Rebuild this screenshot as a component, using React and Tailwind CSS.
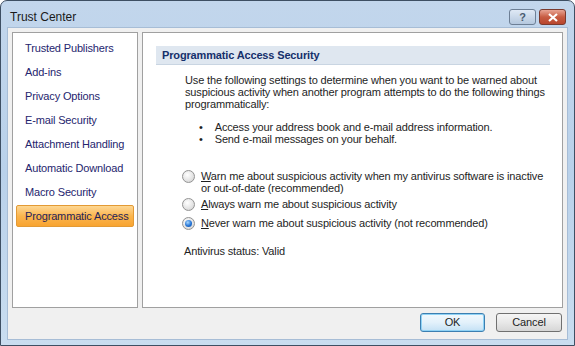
import React from "react";

const navItems = [
  "Trusted Publishers",
  "Add-ins",
  "Privacy Options",
  "E-mail Security",
  "Attachment Handling",
  "Automatic Download",
  "Macro Security",
  "Programmatic Access",
];

const Radio = ({ checked }) => (
  <span className="w-[13px] h-[13px] shrink-0 rounded-full border border-[#939393] bg-[radial-gradient(circle_at_40%_35%,#ffffff,#e0e0e0_65%,#c6c6c6)] flex items-center justify-center">
    {checked && (
      <span className="w-[7px] h-[7px] rounded-full bg-[radial-gradient(circle_at_40%_35%,#a8d8ff,#2473d4_55%,#0d4ea6)]" />
    )}
  </span>
);

const App = () => {
  return (
    <div
      className="w-[575px] h-[346px] flex flex-col rounded-t-[7px] border border-[#3e4f63] bg-gradient-to-b from-[#c2d6ec] via-[#b9d1ea] to-[#c9ddf0] text-[11px] tracking-[-0.15px] text-[#1e1e1e]"
      style={{ fontFamily: '"Liberation Sans", Arial, sans-serif' }}
    >
      {/* title bar */}
      <div className="h-[26px] flex items-start justify-between pl-[9px] pr-[8px]">
        <span className="mt-[9px] text-[12px] leading-[14px] tracking-normal text-[#1a1a1a]">Trust Center</span>
        <div className="flex gap-[3px] mt-[8px]">
          <button className="w-[27px] h-[16px] rounded-[3px] border border-[#6d7f95] bg-gradient-to-b from-[#dfe9f5] to-[#b5c8de] flex items-center justify-center text-[11px] font-bold text-[#4a5b70] leading-none">
            ?
          </button>
          <button className="w-[27px] h-[16px] rounded-[3px] border border-[#7a3a2e] bg-gradient-to-b from-[#e7a494] via-[#c75c42] to-[#b8462d] flex items-center justify-center">
            <svg width="10" height="9" viewBox="0 0 10 9">
              <path d="M1 1 L9 8 M9 1 L1 8" stroke="#ffffff" strokeWidth="2.2" />
            </svg>
          </button>
        </div>
      </div>

      {/* body */}
      <div className="flex-1 mx-[6px] mb-[5px] bg-[#f0f0f0] border border-[#a7bdd6] flex flex-col pt-[4px] pl-[4px] pr-[4px]">
        <div className="flex gap-[4px] h-[276px]">
          {/* left nav */}
          <div className="w-[126px] shrink-0 bg-white border border-[#a0a0a0] pt-[3px] px-[3px] flex flex-col">
            {navItems.map((item, i) => {
              const active = i === navItems.length - 1;
              return (
                <div
                  key={item}
                  className={
                    active
                      ? "h-[22px] my-[1px] flex items-center pl-[8px] whitespace-nowrap rounded-[2px] border border-[#e39a35] bg-gradient-to-b from-[#fdd792] via-[#fbb54d] to-[#f8a430] text-[#1f1f5a]"
                      : "h-[22px] my-[1px] flex items-center pl-[9px] whitespace-nowrap text-[#25256e]"
                  }
                >
                  {item}
                </div>
              );
            })}
          </div>

          {/* right content */}
          <div className="flex-1 min-w-0 bg-white border border-[#a0a0a0] pt-[13px] pl-[13px] pr-[12px]">
            <div className="h-[19px] bg-[#dfe7f0] border-b border-[#c9d5e2] flex items-center pl-[6px] font-bold text-[#15306b]">
              Programmatic Access Security
            </div>
            <div className="pl-[29px] pt-[9px] leading-[12px] whitespace-nowrap">
              <p>
                Use the following settings to determine when you want to be warned about
                <br />
                suspicious activity when another program attempts to do the following things
                <br />
                programmatically:
              </p>
              <ul className="mt-[11px] pl-[14px]">
                <li className="flex gap-[12px]">
                  <span>•</span>
                  <span>Access your address book and e-mail address information.</span>
                </li>
                <li className="flex gap-[12px]">
                  <span>•</span>
                  <span>Send e-mail messages on your behalf.</span>
                </li>
              </ul>
            </div>
            <div className="pl-[26px] pt-[25px] leading-[12px] whitespace-nowrap flex flex-col">
              <label className="flex gap-[6px]">
                <Radio />
                <span>
                  <u>W</u>arn me about suspicious activity when my antivirus software is inactive
                  <br />
                  or out-of-date (recommended)
                </span>
              </label>
              <label className="flex gap-[6px] mt-[4px]">
                <Radio />
                <span>
                  <u>A</u>lways warn me about suspicious activity
                </span>
              </label>
              <label className="flex gap-[6px] mt-[6px]">
                <Radio checked />
                <span>
                  <u>N</u>ever warn me about suspicious activity (not recommended)
                </span>
              </label>
            </div>
            <div className="pl-[28px] pt-[15px] leading-[12px]">Antivirus status: Valid</div>
          </div>
        </div>

        {/* buttons */}
        <div className="flex justify-end gap-[11px] pt-[5px] pr-[1px]">
          <button className="w-[65px] h-[19px] rounded-[3px] border border-[#3c7fb1] bg-gradient-to-b from-[#f2f9fd] via-[#e3f1fb] to-[#c4e1f5] text-[11px] text-[#1e1e1e] shadow-[inset_0_0_0_1px_#8fd2f5]">
            OK
          </button>
          <button className="w-[66px] h-[19px] rounded-[3px] border border-[#707070] bg-gradient-to-b from-[#f5f5f5] via-[#e8e8e8] to-[#d6d6d6] text-[11px] text-[#1e1e1e]">
            Cancel
          </button>
        </div>
      </div>
    </div>
  );
};

export default App;
